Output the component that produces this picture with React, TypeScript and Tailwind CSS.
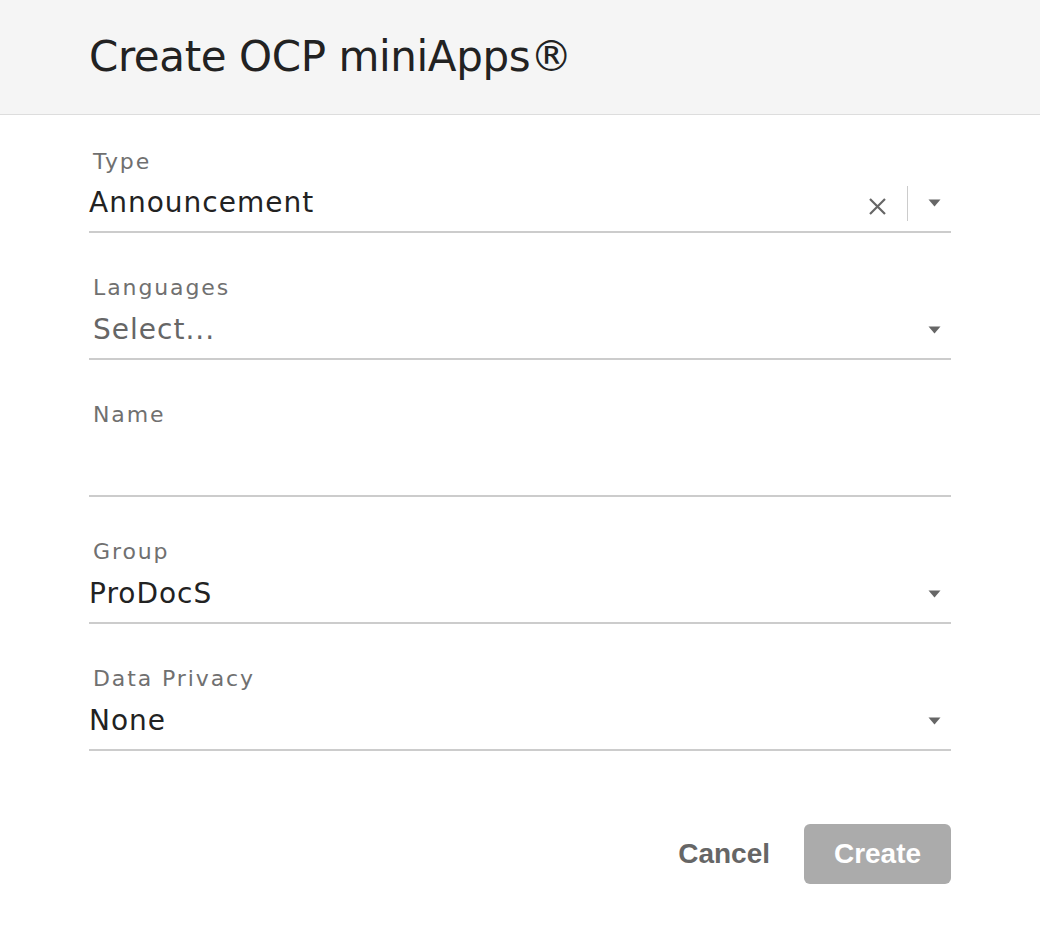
import React from "react";

const Caret = () => (
  <svg width="13" height="8" viewBox="0 0 13 8" className="shrink-0">
    <path d="M0.5 0.5 L12.5 0.5 L6.5 7.5 Z" fill="#666" />
  </svg>
);

const Field = ({
  label,
  children,
  rowClass,
}: {
  label: string;
  children?: React.ReactNode;
  rowClass: string;
}) => (
  <div className="flex flex-col border-b-2 border-[#cccccc]">
    <div className="pl-[4px] text-[22px] leading-[26px] tracking-[1.9px] text-[#707070]">
      {label}
    </div>
    <div className={`flex items-center ${rowClass}`}>{children}</div>
  </div>
);

export default function App() {
  return (
    <div
      className="w-[1040px] h-[946px] bg-white"
      style={{ fontFamily: '"DejaVu Sans", sans-serif' }}
    >
      <div className="h-[115px] bg-[#f5f5f5] border-b border-[#dddddd] flex items-center pl-[89px]">
        <h1 className="text-[42px] leading-none text-[#222] tracking-[-0.4px] font-normal pb-[1px]">
          Create OCP miniApps®
        </h1>
      </div>

      <div className="px-[89px] pt-[34px] flex flex-col gap-[42px]">
        <Field label="Type" rowClass="h-[56px]">
          <div className="flex-1 text-[28px] tracking-[1px] text-[#222]">Announcement</div>
          <svg width="19" height="19" viewBox="0 0 19 19" className="mt-[6px] shrink-0">
            <path d="M2 2 L17 17 M17 2 L2 17" stroke="#666" strokeWidth="2.2" />
          </svg>
          <div className="w-[1px] h-[35px] bg-[#cccccc] ml-[20px] mr-[20px]" />
          <Caret />
          <div className="w-[10px]" />
        </Field>

        <Field label="Languages" rowClass="h-[57px]">
          <div className="flex-1 pl-[4px] text-[28px] tracking-[1px] text-[#666]">Select...</div>
          <Caret />
          <div className="w-[10px]" />
        </Field>

        <Field label="Name" rowClass="h-[67px]" />

        <Field label="Group" rowClass="h-[57px]">
          <div className="flex-1 text-[28px] tracking-[1px] text-[#222]">ProDocS</div>
          <Caret />
          <div className="w-[10px]" />
        </Field>

        <Field label="Data Privacy" rowClass="h-[57px]">
          <div className="flex-1 text-[28px] tracking-[1px] text-[#222]">None</div>
          <Caret />
          <div className="w-[10px]" />
        </Field>
      </div>

      <div
        className="flex justify-end items-center px-[89px] mt-[73px] gap-[34px]"
        style={{ fontFamily: '"Liberation Sans", Arial, sans-serif' }}
      >
        <button className="text-[28px] font-bold text-[#666]">Cancel</button>
        <button className="w-[147px] h-[60px] rounded-[6px] bg-[#ababab] text-white text-[28px] font-bold">
          Create
        </button>
      </div>
    </div>
  );
}
